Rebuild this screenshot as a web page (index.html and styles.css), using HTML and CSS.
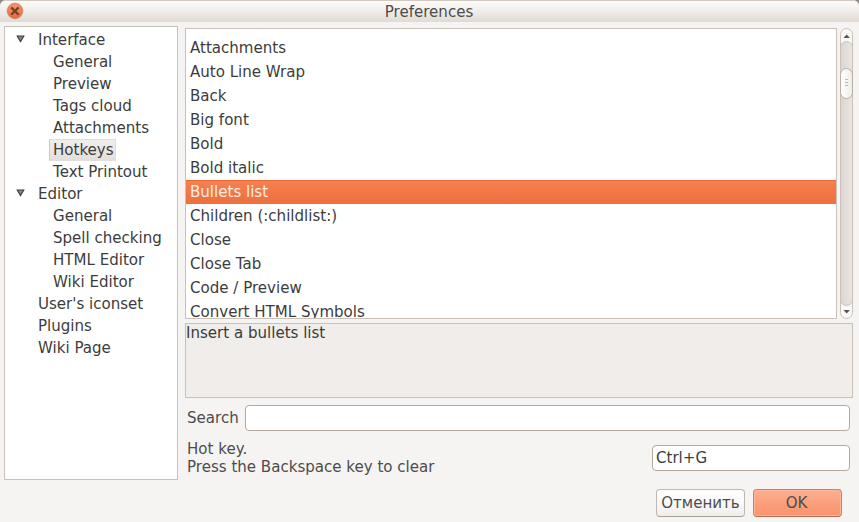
FILE: index.html
```html
<!DOCTYPE html>
<html lang="en">
<head>
<meta charset="utf-8">
<title>Preferences</title>
<link rel="stylesheet" href="styles.css">
</head>
<body>
<div class="window">
  <header class="titlebar">
    <svg class="close" width="18" height="18" viewBox="0 0 18 18">
      <defs><linearGradient id="g" x1="0" y1="0" x2="0" y2="1"><stop offset="0" stop-color="#fa966b"/><stop offset="1" stop-color="#ec6837"/></linearGradient></defs>
      <circle cx="9" cy="9" r="8.5" fill="#d5c9c0"/>
      <circle cx="9" cy="9" r="7.5" fill="url(#g)" stroke="#cb7350" stroke-width=".7"/>
      <path d="M5.2 5.4l7.4 7.4M12.6 5.4l-7.4 7.4" stroke="#74412d" stroke-width="2.3"/>
    </svg>
    <h1 class="title">Preferences</h1>
  </header>
  <main class="content">
    <nav class="tree">
      <div class="node"><svg class="arrow" width="9" height="8" viewBox="0 0 9 8"><path d="M1.2 1h6.6L4.5 6.6z" fill="#888" stroke="#3c3c3c" stroke-width="1.1"/></svg>Interface</div>
      <div class="node child">General</div>
      <div class="node child">Preview</div>
      <div class="node child">Tags cloud</div>
      <div class="node child">Attachments</div>
      <div class="node child"><span class="current">Hotkeys</span></div>
      <div class="node child">Text Printout</div>
      <div class="node"><svg class="arrow" width="9" height="8" viewBox="0 0 9 8"><path d="M1.2 1h6.6L4.5 6.6z" fill="#888" stroke="#3c3c3c" stroke-width="1.1"/></svg>Editor</div>
      <div class="node child">General</div>
      <div class="node child">Spell checking</div>
      <div class="node child">HTML Editor</div>
      <div class="node child">Wiki Editor</div>
      <div class="node leaf">User's iconset</div>
      <div class="node leaf">Plugins</div>
      <div class="node leaf">Wiki Page</div>
    </nav>
    <section class="panel">
      <div class="list-row">
        <ul class="list">
          <li>Attachments</li>
          <li>Auto Line Wrap</li>
          <li>Back</li>
          <li>Big font</li>
          <li>Bold</li>
          <li>Bold italic</li>
          <li class="selected">Bullets list</li>
          <li>Children (:childlist:)</li>
          <li>Close</li>
          <li>Close Tab</li>
          <li>Code / Preview</li>
          <li>Convert HTML Symbols</li>
        </ul>
        <div class="scrollbar">
          <svg class="step" width="11" height="12" viewBox="0 0 11 12"><path d="M2.5 9h6.4L5.7 5.6z" fill="#555"/></svg>
          <div class="track"><div class="thumb"><i></i><i></i><i></i></div></div>
          <svg class="step" width="11" height="12" viewBox="0 0 11 12"><path d="M2.5 4h6.4L5.7 7.4z" fill="#555"/></svg>
        </div>
      </div>
      <div class="description">Insert a bullets list</div>
      <div class="search"><label>Search</label><div class="field"></div></div>
      <div class="hotkey"><p>Hot key.<br>Press the Backspace key to clear</p><div class="field key">Ctrl+G</div></div>
      <div class="buttons"><button>Отменить</button><button class="ok">OK</button></div>
    </section>
  </main>
</div>
</body>
</html>
```
FILE: styles.css
```css
* { box-sizing: border-box; }
body {
  margin: 0;
  background: #8d8c8a;
  color: #3c3c3c;
  font: 15.05px/18px "DejaVu Sans", sans-serif;
}
.window {
  height: 522px;
  overflow: hidden;
  border-radius: 6px 6px 0 0;
  background: #f5f4f2;
}
.titlebar {
  display: flex;
  height: 22px;
  padding: 1px 0 0 6px;
  border-top: 1px solid #d3c8bd;
  border-radius: 6px 6px 0 0;
  background: linear-gradient(#fdfcfb, #f0ede9 50%, #dfdad2);
}
.close { flex: none; }
.title {
  flex: 1;
  margin: 0 25px 0 0;
  font-size: 15.05px;
  font-weight: normal;
  line-height: 20px;
  color: #4c4c4c;
  text-align: center;
}
.content { display: flex; height: 500px; padding: 4px 6px 0 4px; }
.tree {
  width: 174px;
  height: 454px;
  padding-top: 2px;
  border: 1px solid #c9c0b7;
  background: #fff;
}
.node { display: flex; align-items: center; height: 22px; padding-left: 11px; }
.arrow { margin: -2px 13px 0 0; }
.leaf { padding-left: 33px; }
.child { padding-left: 48px; }
.current {
  width: 67px;
  height: 22px;
  margin-left: -4px;
  padding: 1px 0 0 3px;
  border: 1px solid #e2deda;
  border-left-color: #ccc7c2;
  background: linear-gradient(#f0eeec, #e3dfdb);
  line-height: 18px;
}
.panel { flex: 1; margin-left: 7px; padding-top: 2px; }
.list-row { display: flex; justify-content: space-between; height: 291px; }
.list {
  width: 652px;
  margin: 0;
  padding: 7px 0 0;
  overflow: hidden;
  border: 1px solid #c9c0b7;
  background: #fff;
  list-style: none;
}
.list li { height: 24px; padding-left: 4px; line-height: 24px; }
.list .selected {
  border-top: 1px solid #ea6a38;
  background: linear-gradient(#f5804f, #ee6f3d);
  color: #f8eee8;
  line-height: 22px;
}
.scrollbar {
  display: flex;
  flex-direction: column;
  width: 13px;
  border: 1px solid #c9c1b8;
  border-radius: 7px;
  background: #faf9f8;
}
.step { flex: none; }
.track {
  flex: 1;
  margin: 0 -1px;
  padding-top: 26px;
  border: 1px solid #c9c1b8;
  border-radius: 7px;
  background: linear-gradient(90deg, #dcd6d1, #e9e5e2);
}
.thumb {
  display: flex;
  flex-direction: column;
  align-items: center;
  gap: 2px;
  height: 31px;
  margin: 0 -1px;
  padding-top: 10px;
  border: 1px solid #b8aea2;
  border-radius: 7px;
  background: linear-gradient(90deg, #fff, #efedeb);
}
.thumb i { width: 3px; height: 1px; background: #bdb8b2; }
.description {
  height: 75px;
  margin-top: 4px;
  border: 1px solid #c9c0b7;
  background: #f0edea;
}
.search {
  display: flex;
  align-items: center;
  height: 26px;
  margin: 7px 3px 0 2px;
  color: #4c4c4c;
}
.search label { width: 58px; }
.field {
  flex: 1;
  height: 26px;
  padding-left: 3px;
  border: 1px solid #b5a99d;
  border-radius: 4px;
  background: #fff;
  line-height: 24px;
}
.hotkey { display: flex; justify-content: space-between; margin: 9px 3px 0 2px; color: #4c4c4c; }
.hotkey p { margin: 0; }
.key { flex: none; width: 198px; margin-top: 5px; color: #3c3c3c; }
.buttons { display: flex; justify-content: flex-end; gap: 8px; margin: 13px 11px 0 0; }
button {
  width: 89px;
  height: 28px;
  padding: 0 0 1px;
  border: 1px solid #c0b7ae;
  border-bottom-color: #aaa096;
  border-radius: 4px;
  background: linear-gradient(#fff, #fbfaf9 50%, #efedeb);
  color: #4c4c4c;
  font: inherit;
}
.ok {
  padding-right: 2px;
  border-color: #c98466;
  border-bottom-color: #b06c50;
  background: linear-gradient(#fdb092, #fb9c78 60%, #f8936c);
  box-shadow: inset 0 0 0 1px #ffb598;
}
```
